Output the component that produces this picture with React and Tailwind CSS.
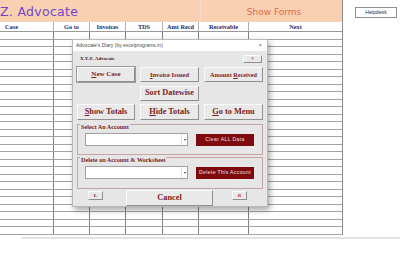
const serif = { fontFamily: '"Liberation Serif", "DejaVu Serif", serif' };
const sans = { fontFamily: '"Liberation Sans", Arial, sans-serif' };

const cols = [
  { name: 'Case', w: 'w-[54px]', align: 'justify-start pl-[5px]' },
  { name: 'Go to', w: 'w-[36px]', align: 'justify-center' },
  { name: 'Invoices', w: 'w-[36px]', align: 'justify-center' },
  { name: 'TDS', w: 'w-[37px]', align: 'justify-center' },
  { name: 'Amt Recd', w: 'w-[36px]', align: 'justify-center' },
  { name: 'Receivable', w: 'w-[50px]', align: 'justify-center' },
  { name: 'Next', w: 'flex-1', align: 'justify-center' },
];

function Btn({ children, className = '', size = 'text-[8px]' }) {
  return (
    <div
      className={`flex items-center justify-center bg-[#e9e9e9] border border-t-[#fafafa] border-l-[#fafafa] border-r-[#8f8f8f] border-b-[#8f8f8f] text-[#7a1d26] font-bold whitespace-nowrap ${size} ${className}`}
      style={serif}
    >
      <span>{children}</span>
    </div>
  );
}

function U({ children }) {
  return <span className="underline">{children}</span>;
}

function Combo() {
  return (
    <div className="w-[103px] h-[13px] bg-white border border-[#a0a0a0] flex justify-end">
      <div className="w-[6px] h-full flex items-center justify-center text-[4px] text-[#333] border-l border-[#e0e0e0]">▾</div>
    </div>
  );
}

function RedBtn({ children }) {
  return (
    <div
      className="w-[58px] h-[12px] bg-[#7e0a0e] flex items-center justify-center text-[5px] text-[#f0e0e0] tracking-[0.4px] whitespace-nowrap"
      style={sans}
    >
      {children}
    </div>
  );
}

function Frame({ label, children, className = '' }) {
  return (
    <div className={`relative border border-[#c9a3a3] ${className}`}>
      <div className="absolute left-[2px] top-[-1px] px-[1px] bg-[#e6e6e6] text-[6.2px] font-bold text-[#7a1d26] leading-none whitespace-nowrap" style={serif}>
        {label}
      </div>
      {children}
    </div>
  );
}

export default function App() {
  const rows = Array.from({ length: 27 });
  return (
    <div className="relative w-[400px] h-[260px] overflow-hidden bg-white" style={sans}>
      <div className="flex">
        <div className="w-[343px] flex flex-col border-r border-[#8a8a8a]">
          <div className="flex h-[22px] bg-[#fad0b2]">
            <div className="w-[200px] flex items-center overflow-hidden">
              <span className="ml-[0px] text-[12.5px] text-[#6f47c7] tracking-[0.3px] leading-none pt-[2px]" style={{ fontFamily: '"DejaVu Sans", sans-serif' }}>
                Z. Advocate
              </span>
            </div>
            <div className="flex-1 flex items-center justify-center pl-[5px] border-l border-[#f6dccb]">
              <span className="text-[9px] text-[#e0684e] leading-none pt-[2px]" style={{ fontFamily: '"DejaVu Sans", sans-serif' }}>
                Show Forms
              </span>
            </div>
          </div>
          <div className="flex h-[10px] border-b border-[#9a9a9a] bg-white">
            {cols.map((c, i) => (
              <div
                key={i}
                className={`${c.w} ${c.align} flex items-center text-[6.3px] font-bold text-[#1e2d6e] border-r border-[#b0b0b0] last:border-r-0 whitespace-nowrap`}
                style={serif}
              >
                {c.name}
              </div>
            ))}
          </div>
          {rows.map((_, r) => (
            <div key={r} className="flex h-[7.5px] border-b border-[#a3a3a3]">
              {cols.map((c, i) => (
                <div key={i} className={`${c.w} border-r border-[#7f7f7f] last:border-r-0`} />
              ))}
            </div>
          ))}
        </div>
        <div className="flex-1 pt-[7px] pl-[12px]">
          <div className="w-[42px] h-[11px] border border-[#8f8f8f] bg-white flex items-center justify-center text-[5.2px] text-[#333]" style={sans}>
            Helpdesk
          </div>
        </div>
      </div>
      <div className="ml-[22px] mt-[2px] h-[2px] bg-[#e3e3e3]" />

      {/* Dialog */}
      <div className="absolute left-[72px] top-[39px] w-[196px] h-[168px] bg-[#e6e6e6] border border-[#b8b8b8] shadow-[2px_3px_6px_rgba(0,0,0,0.35)] flex flex-col">
        <div className="h-[11px] bg-white flex items-center justify-between pl-[3px] pr-[5px] text-[5px] text-[#4a4a4a]" style={sans}>
          <span>Advocate's Diary (by excelprograms.in)</span>
          <span className="text-[6px] text-[#777]">×</span>
        </div>
        <div className="flex-1 flex flex-col px-[4px] pt-[4px]">
          <div className="flex items-center justify-between h-[8px]">
            <span className="pl-[3px] text-[5px] font-bold text-[#3a2020]" style={serif}>X.Y.Z. Advocate</span>
            <Btn className="w-[19px] h-[8px] mr-[1px]" size="text-[5px]">?</Btn>
          </div>
          <div className="flex gap-[5px] mt-[4px]">
            <Btn className="w-[58px] h-[15px] border-[#6a6a6a] outline outline-1 outline-[#9a9a9a]" size="text-[7px]"><U>N</U>ew Case</Btn>
            <Btn className="w-[59px] h-[15px]" size="text-[6.4px]"><U>I</U>nvoice Issued</Btn>
            <Btn className="w-[59px] h-[15px]" size="text-[6.2px]">Amount <U>R</U>eceived</Btn>
          </div>
          <div className="flex gap-[5px] mt-[4px]">
            <div className="w-[58px]" />
            <Btn className="w-[59px] h-[15px]" size="text-[8.3px]">Sort Datewise</Btn>
          </div>
          <div className="flex gap-[5px] mt-[3px]">
            <Btn className="w-[58px] h-[16px]" size="text-[8.3px]"><U>S</U>how Totals</Btn>
            <Btn className="w-[59px] h-[16px]" size="text-[8.3px]"><U>H</U>ide Totals</Btn>
            <Btn className="w-[59px] h-[16px]" size="text-[8.3px]"><U>G</U>o to Menu</Btn>
          </div>
          <Frame label="Select An Account" className="mt-[4px] h-[31px] w-[186px]">
            <div className="flex items-center gap-[8px] pl-[7px] pt-[8px]">
              <Combo />
              <RedBtn>Clear ALL Data</RedBtn>
            </div>
          </Frame>
          <Frame label="Delete an Account & Worksheet" className="mt-[2px] h-[32px] w-[186px]">
            <div className="flex items-center gap-[8px] pl-[7px] pt-[8px]">
              <Combo />
              <RedBtn>Delete This Account</RedBtn>
            </div>
          </Frame>
          <div className="flex items-start mt-[1px]">
            <Btn className="ml-[11px] mt-[1px] w-[15px] h-[9px]" size="text-[5px]">L</Btn>
            <Btn className="ml-[23px] w-[87px] h-[16px]" size="text-[8.3px]">Cancel</Btn>
            <Btn className="ml-[19px] mt-[1px] w-[15px] h-[9px]" size="text-[5px]"><span className="text-[#c03030]">R</span></Btn>
          </div>
        </div>
      </div>
    </div>
  );
}
